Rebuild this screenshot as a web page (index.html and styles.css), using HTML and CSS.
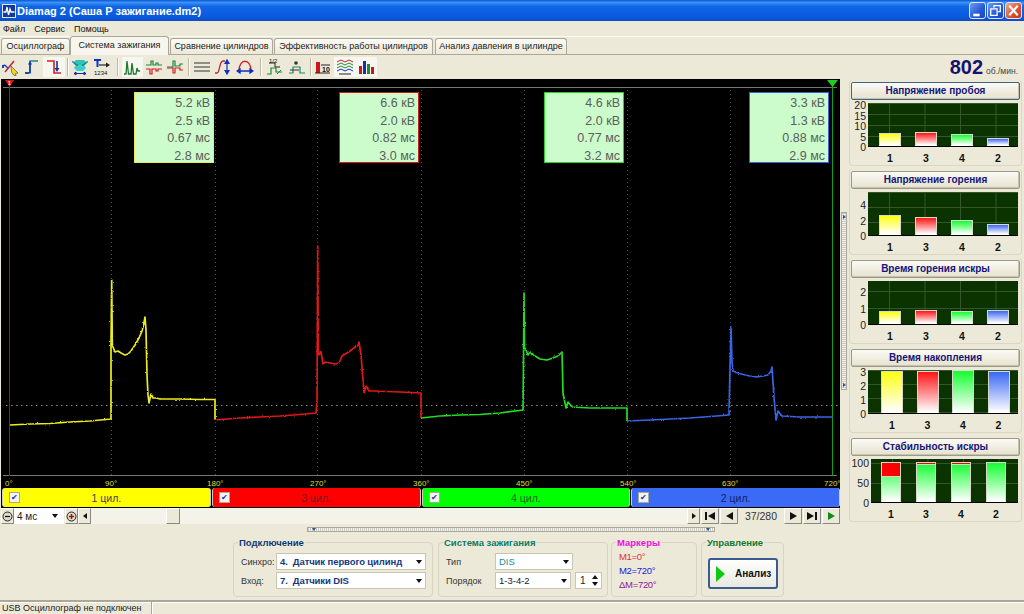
FILE: index.html
```html
<!DOCTYPE html>
<html lang="ru">
<head>
<meta charset="utf-8">
<title>Diamag 2</title>
<link rel="stylesheet" href="styles.css">
</head>
<body>
<div class="app">
  <header class="titlebar">
    <svg class="appicon" width="14" height="14" viewBox="0 0 14 14"><rect x=".5" y=".5" width="13" height="13" fill="#123a9a" stroke="#dfe8ff"/><path d="M1.500 8H4L5 3 6.500 11 8 5 9 8H12.500" fill="none" stroke="#fff" stroke-width="1.300"/></svg>
    <span class="titletext">Diamag 2 (Саша Р зажигание.dm2)</span>
    <div class="winbtns">
      <span class="winbtn"><svg width="17" height="17" viewBox="0 0 16 16"><rect x="4" y="11" width="6" height="2.500" fill="#fff"/></svg></span>
      <span class="winbtn"><svg width="17" height="17" viewBox="0 0 16 16"><path d="M6.500 5.500V3.500H12.500V9H10.500M3.500 6.500H9.500V12.500H3.500Z" fill="none" stroke="#fff" stroke-width="1.200"/></svg></span>
      <span class="winbtn close"><svg width="17" height="17" viewBox="0 0 16 16"><path d="M4 3.500 12 12.500M12 3.500 4 12.500" stroke="#fff" stroke-width="2"/></svg></span>
    </div>
  </header>

  <nav class="menubar"><span>Файл</span><span>Сервис</span><span>Помощь</span></nav>

  <div class="tabs">
    <span class="tab t1">Осциллограф</span>
    <span class="tab t2 active">Система зажигания</span>
    <span class="tab t3">Сравнение цилиндров</span>
    <span class="tab t4">Эффективность работы цилиндров</span>
    <span class="tab t5">Анализ давления в цилиндре</span>
  </div>

  <div class="toolbar">
    <span class="tool"><svg width="18" height="18" viewBox="0 0 18 18"><path d="M1 8C3 6 5 9 6 11" fill="none" stroke="#1c3fc0" stroke-width="1.500"/><path d="M3 14 12 3" stroke="#c2262e" stroke-width="1.500"/><path d="M1 7V10" stroke="#1c3fc0" stroke-width="2"/><path d="M9 8 16 15 13.500 15.500 14 18 11.500 17 9.500 14Z" fill="#f0d820" stroke="#554" stroke-width=".7"/></svg></span>
    <span class="tool"><svg width="18" height="18" viewBox="0 0 18 18"><path d="M2 15H7V3H15" fill="none" stroke="#1b8a8c" stroke-width="1.500"/><path d="M7 15V6M2 15H6" stroke="#1030b0" stroke-width="1.500"/><path d="M5 6.500 7 3 9 6.500Z" fill="#1030b0"/></svg></span>
    <span class="tool on"><svg width="18" height="18" viewBox="0 0 18 18"><path d="M2 3H9V15H16" fill="none" stroke="#d02028" stroke-width="1.600"/><path d="M12 3V11" stroke="#1030b0" stroke-width="1.600"/><path d="M9.500 10H14.500L12 14Z" fill="#1030b0"/></svg></span>
    <i class="sep"></i>
    <span class="tool"><svg width="18" height="18" viewBox="0 0 18 18"><path d="M5 2H13L16 5 13 8H5L2 5Z" fill="#2cc4b4"/><path d="M5 7H13L15 10 12 13H6L3 10Z" fill="#3ad0c4"/><path d="M1 4C4 3 4 8 7 7M17 4C14 3 14 8 11 7" fill="none" stroke="#1040a0"/><path d="M3 15.500H15M3 15.500 5 14V17ZM15 15.500 13 14V17Z" stroke="#1030b0" fill="#1030b0"/></svg></span>
    <span class="tool"><svg width="18" height="18" viewBox="0 0 18 18"><path d="M1 2H8M4.500 2V9" stroke="#1030c0" stroke-width="2"/><path d="M6 7H14" stroke="#222" stroke-width="1.200"/><path d="M13 4.500 17 7 13 9.500Z" fill="#222"/><text x="1" y="17" class="mini">1234</text></svg></span>
    <i class="sep wide"></i>
    <span class="tool on"><svg width="18" height="18" viewBox="0 0 18 18"><path d="M1 16H3L4 3 5.500 16H8L9 5 10.500 16H13L14 10 15 13H17" fill="none" stroke="#1a7a2e" stroke-width="1.300"/></svg></span>
    <span class="tool"><svg width="18" height="18" viewBox="0 0 18 18"><path d="M1 7H6V3H8V7H11V5H13V7H17" fill="none" stroke="#1a8a3a" stroke-width="1.200"/><path d="M1 11H5V16H7V11H11V13H13V11H17" fill="none" stroke="#d02028" stroke-width="1.200"/></svg></span>
    <span class="tool"><svg width="18" height="18" viewBox="0 0 18 18"><path d="M1 9H7V3H9V8H14V6H17" fill="none" stroke="#1a8a3a" stroke-width="1.200"/><path d="M1 10H7V15H9V10H14V12H17" fill="none" stroke="#d02028" stroke-width="1.200"/></svg></span>
    <i class="sep"></i>
    <span class="tool"><svg width="18" height="18" viewBox="0 0 18 18"><path d="M1 5H17M1 9H17M1 13H17" stroke="#333" stroke-width="1.100"/></svg></span>
    <span class="tool"><svg width="18" height="18" viewBox="0 0 18 18"><path d="M1 15H3C6 15 5 3 9 3H11" fill="none" stroke="#d02028" stroke-width="1.300"/><path d="M13 3V15M11 5.500 13 2 15 5.500ZM11 12.500 13 16 15 12.500Z" stroke="#1030c0" fill="#1030c0" stroke-width="1.200"/></svg></span>
    <span class="tool"><svg width="18" height="18" viewBox="0 0 18 18"><path d="M3 13C3 0 15 0 15 13" fill="none" stroke="#d02028" stroke-width="1.300"/><path d="M2 13H16M1 13 4 11V15ZM17 13 14 11V15Z" stroke="#1030c0" fill="#1030c0" stroke-width="1.300"/></svg></span>
    <i class="sep wide"></i>
    <span class="tool"><svg width="18" height="18" viewBox="0 0 18 18"><path d="M1 16H5V10H10V14H16" fill="none" stroke="#1a8a3a" stroke-width="1.200"/><path d="M3 5H9V9H14" fill="none" stroke="#222"/><path d="M11 16 15 12" stroke="#1a8a3a"/><text x="3" y="5" class="mini">1/2</text></svg></span>
    <span class="tool"><svg width="18" height="18" viewBox="0 0 18 18"><path d="M1 15H5V9H12V15H17" fill="none" stroke="#1a8a6a" stroke-width="1.200"/><path d="M2 12H11" stroke="#333"/><circle cx="8" cy="5" r="1.800" fill="#333"/></svg></span>
    <i class="sep"></i>
    <span class="tool"><svg width="18" height="18" viewBox="0 0 18 18"><rect x="2" y="4" width="4" height="11" fill="#d0141c"/><path d="M7 7H16M1 15H16" stroke="#222"/><text x="8" y="14" class="mini b">10</text></svg></span>
    <span class="tool on"><svg width="18" height="18" viewBox="0 0 18 18"><path d="M1 4 5 2 9 4 13 2 17 4" fill="none" stroke="#d02028"/><path d="M1 7 5 5 9 7 13 5 17 7" fill="none" stroke="#1a8a3a"/><path d="M1 10 5 8 9 10 13 8 17 10" fill="none" stroke="#1a8a3a"/><path d="M1 13 5 11 9 13 13 11 17 13" fill="none" stroke="#1030c0"/><path d="M3 16H15" stroke="#222"/></svg></span>
    <span class="tool on"><svg width="18" height="18" viewBox="0 0 18 18"><rect x="2" y="8" width="3" height="8" fill="#d0141c"/><rect x="6" y="3" width="3" height="13" fill="#1030b0"/><rect x="10" y="6" width="3" height="10" fill="#1a8a3a"/><rect x="14" y="9" width="3" height="7" fill="#d0141c"/></svg></span>
    <div class="rpm"><b>802</b><span>об./мин.</span></div>
  </div>

  <div class="work">
    <section class="leftcol">
      <div class="scope">
        <svg class="plot-svg" width="839" height="409" viewBox="1 79 839 409">
          <defs>
            <filter id="jit" x="-2%" y="-5%" width="104%" height="110%" color-interpolation-filters="sRGB">
              <feTurbulence type="fractalNoise" baseFrequency="0.45" numOctaves="2" seed="4" result="n"/>
              <feDisplacementMap in="SourceGraphic" in2="n" scale="2.2" xChannelSelector="R" yChannelSelector="G"/>
            </filter>
          </defs>
          <g class="grid">
            <path d="M111.500 90V476M215.500 90V476M317.500 90V476M421.500 90V476M524.500 90V476M627.500 90V476M730.500 90V476"/>
          </g>
          <path class="hline" d="M6 405.500H838"/>
          <path class="rule" d="M3 87.500H837M3 475.500H837"/>
          <path class="mk red" d="M9.500 84V476"/>
          <path class="mk green" d="M832.500 84V476"/>
          <path class="flag-r" d="M5 80H14L9.500 87Z"/>
          <text class="flag-t" x="9.500" y="84.500">1</text>
          <path class="flag-g" d="M827 80H838L832.500 87Z"/>
          <g filter="url(#jit)">
          <polyline class="w y" points="10,425 30,424 50,423.500 70,422 90,421 111,419 111,344 111.700,280 112.300,344 113,347 115,352 118,351 121,353 125,355 128,354 131,351 135,345 139,338 142,331 144,323 145,317 146,330 147,375 148,395 149,403 151,394 153,398 156,398 160,399 180,399 200,399.500 215,399.500 215,420"/>
          <polyline class="w r" points="215,420 240,418 260,417 280,416 300,414.500 316,413 317,400 317.700,246 318.300,350 319,355 321,352 323,364 325,362 335,364 339,363 342,356 350,351 358,345 359,342 361,355 363,380 364,393 366,386 369,391 375,391 400,392 421,393 421,418"/>
          <polyline class="w g" points="421,418 440,416 460,415 480,414.500 500,413 523,410 523.500,360 524,293 524.500,347 526,350 528,355 530,352 535,356 540,359 547,360 553,358 558,356 562,352 563,393 566,408 568,402 572,407 590,408 610,408 627,408 627,421"/>
          <polyline class="w b" points="627,421 650,420 670,419 690,418 710,416.500 729,415 730,367 731,327 732,362 733,371 738,373 745,375 750,376 757,377 763,376 768,375 771,371 772,367 774,397 776,420 778,411 782,416 800,417 820,417 832,417"/>
          </g>
          <g class="deg">
            <text x="5" y="486">0°</text><text x="105" y="486">90°</text><text x="207" y="486">180°</text><text x="310" y="486">270°</text><text x="413" y="486">360°</text><text x="516" y="486">450°</text><text x="620" y="486">540°</text><text x="722" y="486">630°</text><text x="824" y="486">720°</text>
          </g>
        </svg>
        <div class="info i1"><span>5.2 кВ</span><span>2.5 кВ</span><span>0.67 мс</span><span>2.8 мс</span></div>
        <div class="info i2"><span>6.6 кВ</span><span>2.0 кВ</span><span>0.82 мс</span><span>3.0 мс</span></div>
        <div class="info i3"><span>4.6 кВ</span><span>2.0 кВ</span><span>0.77 мс</span><span>3.2 мс</span></div>
        <div class="info i4"><span>3.3 кВ</span><span>1.3 кВ</span><span>0.88 мс</span><span>2.9 мс</span></div>
        <div class="cyls">
          <div class="cyl cy"><span class="chk">✔</span><span class="cname">1 цил.</span></div>
          <div class="cyl cr"><span class="chk">✔</span><span class="cname">3 цил.</span></div>
          <div class="cyl cg"><span class="chk">✔</span><span class="cname">4 цил.</span></div>
          <div class="cyl cb"><span class="chk">✔</span><span class="cname">2 цил.</span></div>
        </div>
      </div>
      <div class="scrollrow">
        <span class="sb"><svg width="11" height="11" viewBox="0 0 11 11"><circle cx="5.500" cy="5.500" r="4.500" fill="#dcd9c8" stroke="#222"/><path d="M3 5.500H8" stroke="#111" stroke-width="1.200"/></svg></span>
        <span class="combo"><span>4 мс</span><i class="arrow"></i></span>
        <span class="sb plus"><svg width="11" height="11" viewBox="0 0 11 11"><circle cx="5.500" cy="5.500" r="4.500" fill="#dcd9c8" stroke="#222"/><path d="M3 5.500H8M5.500 3V8" stroke="#a01010" stroke-width="1.400"/></svg></span>
        <span class="sb"><i class="tri-l"></i></span>
        <div class="track"><span class="thumb"></span></div>
        <span class="sb"><i class="tri-r"></i></span>
        <span class="sb nav"><i class="bar-l"></i><i class="tri-l big"></i></span>
        <span class="sb nav"><i class="tri-l big"></i></span>
        <span class="counter">37/280</span>
        <span class="sb nav"><i class="tri-r big"></i></span>
        <span class="sb nav"><i class="tri-r big"></i><i class="bar-l"></i></span>
        <span class="sb nav"><i class="tri-r big gr"></i></span>
      </div>
    </section>

    <div class="vsplit"><i class="tri-r blue"></i><i class="tri-r blue"></i></div>

    <aside class="rightcol">
      <div class="card">
        <div class="head">Напряжение пробоя</div>
        <div class="chart">
          <div class="yaxis ya-tall"><span>20</span><span>15</span><span>10</span><span>5</span><span>0</span></div>
          <div class="plot gh10">
            <i class="bar by" style="height:13px"></i><i class="bar br" style="height:14px"></i><i class="bar bg" style="height:12px"></i><i class="bar bb" style="height:8px"></i>
          </div>
          <div class="xrow"><span>1</span><span>3</span><span>4</span><span>2</span></div>
        </div>
      </div>
      <div class="card">
        <div class="head">Напряжение горения</div>
        <div class="chart">
          <div class="yaxis ya-p8"><span>4</span><span>2</span><span>0</span></div>
          <div class="plot gh15">
            <i class="bar by" style="height:20px"></i><i class="bar br" style="height:18px"></i><i class="bar bg" style="height:15px"></i><i class="bar bb" style="height:11px"></i>
          </div>
          <div class="xrow"><span>1</span><span>3</span><span>4</span><span>2</span></div>
        </div>
      </div>
      <div class="card">
        <div class="head">Время горения искры</div>
        <div class="chart">
          <div class="yaxis ya-p6"><span>2</span><span>1</span><span>0</span></div>
          <div class="plot gh17">
            <i class="bar by" style="height:13px"></i><i class="bar br" style="height:14px"></i><i class="bar bg" style="height:13px"></i><i class="bar bb" style="height:14px"></i>
          </div>
          <div class="xrow"><span>1</span><span>3</span><span>4</span><span>2</span></div>
        </div>
      </div>
      <div class="card wide">
        <div class="head">Время накопления</div>
        <div class="chart">
          <div class="yaxis ya-tall"><span>3</span><span>2</span><span>1</span><span>0</span></div>
          <div class="plot gh14">
            <i class="bar by" style="height:42px"></i><i class="bar br" style="height:42px"></i><i class="bar bg" style="height:43px"></i><i class="bar bb" style="height:42px"></i>
          </div>
          <div class="xrow"><span>1</span><span>3</span><span>4</span><span>2</span></div>
        </div>
      </div>
      <div class="card pct">
        <div class="head">Стабильность искры</div>
        <div class="chart">
          <div class="yaxis ya-pct"><span>100</span><span>50</span><span>0</span></div>
          <div class="plot gh20">
            <i class="bar bg" style="height:40px"><b class="loss" style="height:14px"></b></i><i class="bar bg" style="height:40px"><b class="loss" style="height:2px"></b></i><i class="bar bg" style="height:40px"><b class="loss" style="height:2px"></b></i><i class="bar bg" style="height:40px"></i>
          </div>
          <div class="xrow"><span>1</span><span>3</span><span>4</span><span>2</span></div>
        </div>
      </div>
    </aside>
  </div>

  <div class="hsplit"><i class="tri-d"></i><i class="tri-d"></i></div>

  <div class="panel">
    <fieldset class="group g-conn">
      <legend>Подключение</legend>
      <div class="frow"><label>Синхро:</label><span class="select strong"><span>4.&nbsp; Датчик первого цилинд</span><i class="arrow"></i></span></div>
      <div class="frow"><label>Вход:</label><span class="select strong"><span>7.&nbsp; Датчики DIS</span><i class="arrow"></i></span></div>
    </fieldset>
    <fieldset class="group g-sys">
      <legend>Система зажигания</legend>
      <div class="frow"><label>Тип</label><span class="select teal"><span>DIS</span><i class="arrow"></i></span></div>
      <div class="frow"><label>Порядок</label><span class="select"><span>1-3-4-2</span><i class="arrow"></i></span><span class="spin"><span>1</span><span class="spinarrows"><i class="up"></i><i class="dn"></i></span></span></div>
    </fieldset>
    <fieldset class="group g-mark">
      <legend>Маркеры</legend>
      <div class="m m1">M1=0°</div>
      <div class="m m2">M2=720°</div>
      <div class="m m3">ΔM=720°</div>
    </fieldset>
    <fieldset class="group g-ctrl">
      <legend>Управление</legend>
      <div class="runbtn"><i class="play"></i><span>Анализ</span></div>
    </fieldset>
  </div>

  <footer class="status"><span class="st1">USB Осциллограф не подключен</span><span class="st2"></span></footer>
</div>
</body>
</html>
```
FILE: styles.css
```css
* { box-sizing: border-box; }
html, body { margin: 0; padding: 0; }
body {
  width: 1024px; height: 614px; overflow: hidden;
  background: #ece9d8;
  font: 10px "Liberation Sans", Arial, sans-serif;
  color: #222;
}
i, b { display: block; font-style: normal; }
.app { display: flex; flex-direction: column; width: 1024px; height: 614px; }

/* title */
.titlebar {
  height: 21px; flex: none; display: flex; align-items: center; padding: 0 2px;
  background: linear-gradient(180deg, #0a58d8 0, #3d93f5 12%, #0f66e4 30%, #0a5be0 75%, #0a4dc8 100%);
}
.appicon { flex: none; }
.titletext { margin-left: 1px; color: #fff; font: bold 11px "Liberation Sans", sans-serif; white-space: nowrap; }
.winbtns { margin-left: auto; display: flex; gap: 1px; }
.winbtn { width: 17px; height: 17px; border: 1px solid #dfe8ff; border-radius: 3px; background: linear-gradient(135deg, #6f9cf0, #2458d8 60%, #1a44c0); display: flex; }
.winbtn svg { margin: -1px; }
.winbtn.close { background: linear-gradient(135deg, #f0a890, #dd5030 60%, #c03818); }

/* menu */
.menubar { height: 16px; flex: none; display: flex; gap: 9px; padding: 2px 0 0 3px; font-size: 9px; line-height: 13px; color: #111; border-bottom: 1px solid #fbfaf4; }

/* tabs */
.tabs { height: 18px; flex: none; display: flex; align-items: flex-end; padding-left: 1px; border-bottom: 1px solid #aca899; gap: 1px; }
.tab { height: 16px; line-height: 15px; text-align: center; font-size: 9px; background: linear-gradient(#fbfaf5, #ece9d8); border: 1px solid #aca899; border-bottom: 0; border-radius: 3px 3px 0 0; white-space: nowrap; }
.t1 { width: 69px; } .t3 { width: 103px; } .t4 { width: 159px; } .t5 { width: 132px; margin-left: 1px; }
.t2 { width: 99px; height: 19px; margin: 0 0 -1px -1px; background: #f7f6ee; line-height: 17px; position: relative; }

/* toolbar */
.toolbar { height: 24px; flex: none; display: flex; align-items: center; }
.tool { width: 21.500px; height: 20px; display: flex; align-items: center; justify-content: center; flex: none; }
.tool.on { background: #f7f6ef; }
.sep { width: 1px; height: 18px; background: #bdb9a5; margin: 0 2px; box-shadow: 1px 0 #fff; flex: none; }
.sep.wide { margin: 0 4px; }
.mini { font: 6px "Liberation Sans", sans-serif; fill: #111; }
.mini.b { font-weight: bold; font-size: 7px; }
.rpm { margin-left: auto; padding-right: 6px; display: flex; align-items: baseline; gap: 3px; color: #14146e; }
.rpm b { font-size: 20px; line-height: 22px; }
.rpm span { font-size: 8.500px; color: #444; }

/* workspace */
.work { height: 445px; flex: none; display: flex; }
.leftcol { width: 840px; padding-left: 1px; display: flex; flex-direction: column; flex: none; }
.scope { position: relative; background: #000; height: 429px; flex: none; }
.plot-svg { display: block; }
.grid path { stroke: #4a4a4a; stroke-dasharray: 1 3; fill: none; }
.hline { stroke: #8a8a80; stroke-dasharray: 1.500 3.500; fill: none; }
.rule { stroke: #767676; fill: none; }
.mk { fill: none; }
.mk.red { stroke: #b01010; }
.mk.green { stroke: #12a018; }
.flag-r { fill: #e01414; }
.flag-g { fill: #22cc22; }
.flag-t { font: bold 5px "Liberation Sans", sans-serif; fill: #fff; text-anchor: middle; }
.w { fill: none; stroke-width: 1.700; stroke-linejoin: round; }
.w.y { stroke: #ecec1c; }
.w.r { stroke: #e01818; }
.w.g { stroke: #22de22; }
.w.b { stroke: #3a64e6; }
.deg text { font: 8px "Liberation Sans", sans-serif; fill: #dede3a; }

.info { position: absolute; top: 13px; width: 80px; height: 71px; background: #ccfbcc; border: 1px solid #888; padding: 2px 3px 0 0; display: flex; flex-direction: column; align-items: flex-end; font-size: 12.500px; line-height: 17.600px; color: #5a5f5a; }
.i1 { left: 133px; border-color: #e8e860; }
.i2 { left: 338px; border-color: #d01a1a; }
.i3 { left: 543px; border-color: #28d028; }
.i4 { left: 748px; border-color: #3a60e0; }

.cyls { display: flex; gap: 1px; height: 20px; padding-left: 1px; }
.cyl { width: 209.200px; height: 19px; border-radius: 3px; display: flex; align-items: center; position: relative; border: 1px solid #cfcfc0; border-width: 0 1px; }
.cy { background: #ffff00; } .cr { background: #ff0000; } .cg { background: #00ff00; } .cb { background: #3b6bf6; }
.chk { width: 11px; height: 11px; margin-left: 6px; background: #f4f4ee; border: 1px solid #a9a999; color: #2030b0; font-size: 8px; line-height: 9px; text-align: center; flex: none; }
.cname { flex: 1; text-align: center; font-size: 10.500px; color: #444; margin-right: 17px; }
.cb .cname { color: #14206a; } .cr .cname { color: #7a1a1a; } .cg .cname { color: #186a18; }

/* scroll row */
.scrollrow { height: 16px; flex: none; display: flex; align-items: stretch; }
.sb { width: 13px; background: #ece9d8; border: 1px solid; border-color: #fff #888 #888 #fff; display: flex; align-items: center; justify-content: center; flex: none; gap: 1px; }
.plus { margin-left: 1px; }
.combo { width: 50px; background: #fff; display: flex; align-items: center; justify-content: space-between; padding: 0 6px 0 3px; font-size: 10px; flex: none; }
.track { flex: 1; background: #f4f3ea; display: flex; padding-left: 75px; }
.thumb { width: 14px; background: #ece9d8; border: 1px solid; border-color: #fff #888 #888 #fff; }
.nav { width: 18px; margin-left: 1px; }
.counter { width: 44px; margin-left: 1px; text-align: center; font-size: 10.500px; line-height: 16px; color: #333; flex: none; }
.arrow { width: 0; height: 0; border: 3.500px solid transparent; border-top: 4px solid #111; border-bottom: 0; flex: none; }
.tri-l, .tri-r { width: 0; height: 0; border-style: solid; border-color: transparent; border-width: 3.500px 0; }
.tri-l { border-right: 4px solid #111; }
.tri-r { border-left: 4px solid #111; }
.tri-l.big, .tri-r.big { border-width: 4px 0; }
.tri-l.big { border-right: 7px solid #111; }
.tri-r.big { border-left: 7px solid #111; }
.tri-r.gr { border-left-color: #128a18; }
.bar-l { width: 2px; height: 8px; background: #111; }

/* splitters */
.vsplit { width: 6px; height: 178px; margin: 133px 0 0 1px; flex: none; background: repeating-linear-gradient(#c8c8c0 0 1px, #f5f5ee 1px 2px); border: 1px solid #aca899; display: flex; flex-direction: column; justify-content: space-between; align-items: center; padding: 2px 0; }
.tri-r.blue { border-width: 2px 0; border-left: 3px solid #2850a8; }
.hsplit { width: 408px; height: 5px; margin: 3px 0 0 307px; flex: none; background: repeating-linear-gradient(90deg, #c8c8c0 0 1px, #f5f5ee 1px 2px); border: 1px solid #aca899; display: flex; justify-content: space-between; padding: 0 4px; align-items: center; }
.tri-d { width: 0; height: 0; border: 2.500px solid transparent; border-top: 3px solid #2850a8; border-bottom: 0; }

/* right column */
.rightcol { width: 174px; margin-left: 2px; padding-top: 1px; display: flex; flex-direction: column; gap: 3px; flex: none; }
.card { height: 86px; width: 173px; padding: 2px 1px 0; border: 1px solid #dbd7c3; border-radius: 4px; border-top-width: 0; }
.head { height: 18px; line-height: 16px; text-align: center; font-weight: bold; font-size: 10px; color: #15157a; background: linear-gradient(#fbfaf4, #e6e2ce); border: 1px solid #9a9a8a; border-radius: 2px; box-shadow: inset -1px -1px #c6c2ae; }
.card:first-child .head { border-color: #3d6680; }
.chart { margin-top: 3px; display: grid; grid-template-columns: 17px 150px; grid-template-rows: 44px 16px; }
.pct .chart { grid-template-columns: 20px 147px; }
.yaxis { display: flex; flex-direction: column; justify-content: space-between; align-items: flex-end; padding: 0 2px 0 0; font-size: 10.500px; line-height: 10px; color: #222; }
.ya-tall { margin-top: -3px; height: 52px; }
.ya-p8 { padding-top: 8px; height: 49px; }
.ya-p6 { padding-top: 6px; height: 49px; }
.ya-pct { margin-top: -1px; height: 50px; }
.plot { display: flex; gap: 14px; padding-left: 11px; align-items: flex-end; background-color: #0b3300; background-image: linear-gradient(90deg, #35562b 1px, transparent 1px), linear-gradient(#35562b 1px, transparent 1px); background-position: 21px 0, 0 0; background-size: 35.500px 100%, 100% 11px; border-bottom: 1px solid #000; }
.gh10 { background-size: 35.500px 100%, 100% 11px; }
.gh15 { background-size: 35.500px 100%, 100% 15px; }
.gh17 { background-size: 35.500px 100%, 100% 17px; background-position: 21px 0, 0 10px; }
.gh14 { background-size: 35.500px 100%, 100% 14px; }
.gh20 { background-size: 35.500px 100%, 100% 20px; background-position: 21px 0, 0 4px; }
.xrow { grid-column: 2; display: flex; gap: 14px; padding: 5px 0 0 11px; font-weight: bold; font-size: 10.500px; line-height: 12px; color: #111; }
.xrow span { width: 22px; text-align: center; }
.bar { width: 22px; border: 1px solid #d8d8cc; border-bottom-color: #fff; flex: none; }
.by { background: linear-gradient(#ffff14, #fff); }
.br { background: linear-gradient(#ff1414, #fff); }
.bg { background: linear-gradient(#14ff30, #fff); }
.bb { background: linear-gradient(#3a68f4, #fff); }
.loss { background: #ff0000; border-bottom: 1px solid #d8d8c8; }
.wide .plot, .wide .xrow { padding-left: 13px; gap: 13.500px; }
.pct .plot, .pct .xrow { padding-left: 10px; gap: 15px; }
.pct .bar, .pct .xrow span { width: 20px; }

/* bottom panel */
.panel { height: 68px; flex: none; display: flex; padding-left: 233px; gap: 4px; }
.group { padding: 4px 5px 0 7px; border: 1px solid #d8d4c0; border-radius: 4px; height: 60px; margin: 5px 0 0; min-width: 0; }
.group legend { padding: 0 1px; margin-left: -3px; font: bold 9.500px "Liberation Sans", sans-serif; line-height: 11px; white-space: nowrap; }
.g-conn { width: 200px; } .g-conn legend { color: #0c3a78; }
.g-sys { width: 170px; margin-left: 1px; } .g-sys legend { color: #107a64; }
.g-mark { width: 86px; margin-left: -1px; } .g-mark legend { color: #f010e0; }
.g-ctrl { width: 83px; } .g-ctrl legend { color: #107a30; }
.frow { display: flex; align-items: center; height: 19px; }
.frow label { width: 35px; font-size: 9px; color: #333; flex: none; }
.g-sys .frow label { width: 49px; }
.select { display: flex; align-items: center; justify-content: space-between; width: 150px; height: 17px; background: #fff; border: 1px solid #c9c6b2; padding: 0 3px; font-size: 9.500px; white-space: nowrap; }
.select > span { min-width: 0; }
.select.strong { font: bold 9.500px "Liberation Sans", sans-serif; letter-spacing: -.1px; color: #123a80; }
.g-sys .select { width: 78px; }
.select.teal { color: #1c8ca0; }
.spin { width: 27px; height: 17px; margin-left: 4px; background: #fff; border: 1px solid #c9c6b2; display: flex; align-items: center; justify-content: space-between; padding: 0 3px 0 4px; font-size: 10px; flex: none; }
.spinarrows { display: flex; flex-direction: column; gap: 3px; }
.up { border: 3.500px solid transparent; border-bottom: 4px solid #111; border-top: 0; }
.dn { border: 3.500px solid transparent; border-top: 4px solid #111; border-bottom: 0; }
.m { font-size: 9.500px; letter-spacing: -.3px; line-height: 14px; }
.m1 { color: #e03030; margin-top: -2px; } .m2 { color: #2020d8; } .m3 { color: #901a90; }
.runbtn { width: 70px; height: 31px; margin: 6px 0 0 -1px; border: 2px solid #3a5a90; border-radius: 3px; background: linear-gradient(#fff, #e8e8e0); display: flex; align-items: center; padding-left: 6px; gap: 10px; }
.play { width: 0; height: 0; border-style: solid; border-color: transparent; border-width: 8px 0; border-left: 9px solid #10c810; flex: none; }
.runbtn span { font-weight: bold; font-size: 10px; color: #111; }

/* status */
.status { flex: 1; display: flex; border-top: 2px solid #aca899; box-shadow: inset 0 1px #fff; font-size: 9px; line-height: 12px; }
.st1 { width: 152px; padding-left: 2px; border-right: 1px solid #aca899; white-space: nowrap; color: #222; }
.st2 { flex: 1; border-left: 1px solid #fff; }
```
